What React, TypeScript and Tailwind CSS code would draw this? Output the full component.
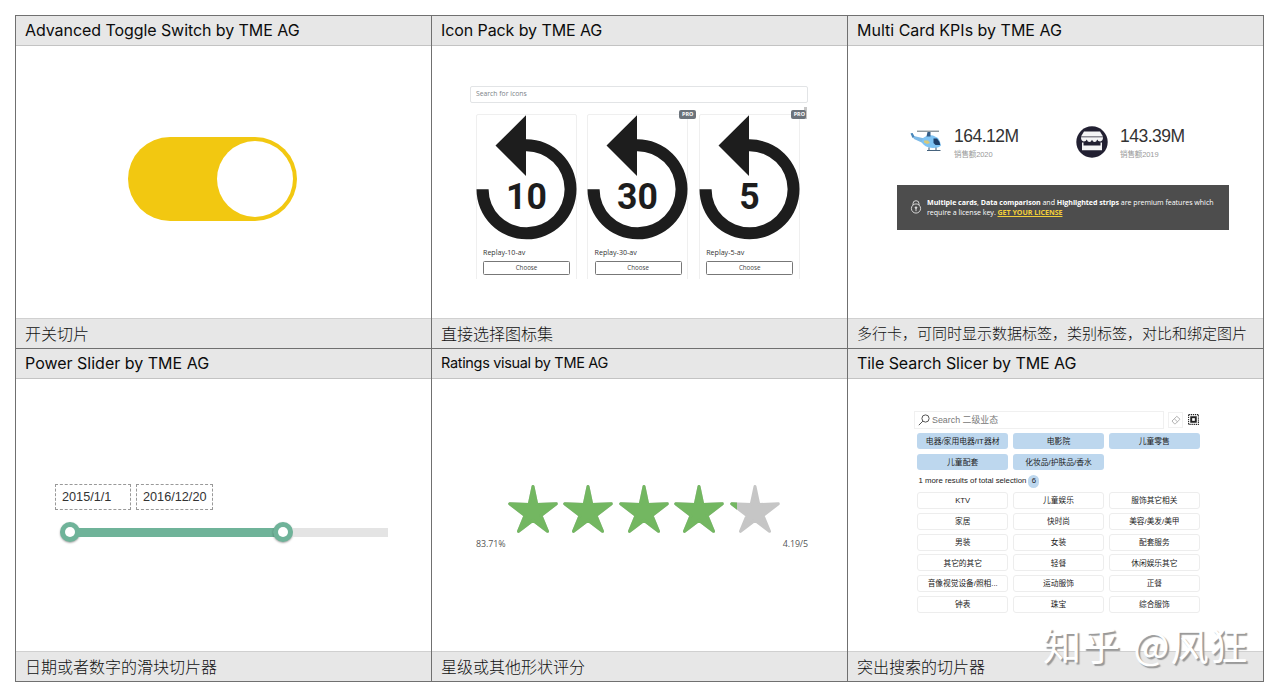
import type { ReactNode } from "react";

const CJK = "font-['Liberation_Sans','Noto_Sans_CJK_SC',sans-serif]";
const SEGOE = "font-['Open_Sans','Noto_Sans_CJK_SC',sans-serif]";

function Cell({
  title,
  titleClass,
  caption,
  captionClass,
  children,
}: {
  title: string;
  titleClass: string;
  caption: string;
  captionClass: string;
  children: ReactNode;
}) {
  return (
    <section className="flex h-[332px] w-[415px] flex-col bg-white">
      <h2
        className={`flex h-[30px] shrink-0 items-center border-b border-[#c3c3c3] bg-[#e7e7e7] pb-[2px] pl-[9px] font-['Inter',sans-serif] whitespace-nowrap text-[#0c0c0c] ${titleClass}`}
      >
        {title}
      </h2>
      <div className="h-[272px] shrink-0 overflow-hidden">{children}</div>
      <p
        className={`flex h-[30px] shrink-0 items-center border-t border-[#d0d0d0] bg-[#e7e7e7] pl-[9px] font-['Noto_Sans_CJK_SC',sans-serif] font-light whitespace-nowrap text-[#111] ${captionClass}`}
      >
        {caption}
      </p>
    </section>
  );
}

function ToggleSwitch() {
  return (
    <div className="pt-[91px] pl-[112px]">
      <div className="flex h-[84px] w-[169px] items-center justify-end rounded-full bg-[#f2c811] pr-1">
        <div className="size-[76px] rounded-full bg-white" />
      </div>
    </div>
  );
}

function ReplayCard({ value, pro, clipped }: { value: string; pro?: boolean; clipped?: boolean }) {
  return (
    <div className="relative h-[170px] w-[101px] shrink-0 rounded-t-[2px] border border-[#efefef]">
      <svg viewBox="0 0 101 126" className="-mt-px -ml-px block h-[126px] w-[101px]" fill="#1d1d1d">
        <path d="M50 1.2V25.3A50 50 0 1 1 .5 75.3H12.6A38 38 0 1 0 50 37.3V62L19.5 31.6Z" />
        <text
          transform="translate(50.5 94.5) scale(.95 1)"
          textAnchor="middle"
          className="font-['Roboto',sans-serif] text-[37.500px] font-bold"
        >
          {value}
        </text>
      </svg>
      <div className={`pl-[6.5px] text-[7px] leading-none text-[#333] ${SEGOE}`}>
        <div className="mt-[9px] text-[7.1px]">Replay-{value}-av</div>
        <div className="mt-[5px] flex h-[14px] w-[87px] items-center justify-center rounded-[1.5px] border border-[#777] text-[6.2px] text-[#444]">
          Choose
        </div>
      </div>
      {pro && (
        <span
          className={`absolute -top-[5px] flex h-[9px] items-center rounded-[2px] bg-[#6c737b] pl-[3px] font-['Open_Sans',sans-serif] text-[5.4px] leading-none font-bold text-white ${
            clipped ? "left-[91px] w-[15px] overflow-hidden" : "left-[91px] w-[17px]"
          }`}
        >
          PRO
        </span>
      )}
    </div>
  );
}

function IconPack() {
  return (
    <div className="pt-[40px] pl-[38px]">
      <div
        className={`flex h-[17px] w-[338px] items-center rounded-[2px] border border-[#e2e4e6] pl-[5px] text-[6.8px] text-[#7c8288] ${SEGOE}`}
      >
        Search for icons
      </div>
      <div className="flex h-[176px] w-[338px] overflow-hidden">
        <div className="flex gap-[10.6px] pt-[11px] pl-[5.5px]">
          <ReplayCard value="10" />
          <ReplayCard value="30" pro />
          <ReplayCard value="5" pro clipped />
        </div>
        <div className="mt-1 ml-[4.5px] h-[12px] w-[3px] shrink-0 bg-[#c6c6c6]" />
      </div>
    </div>
  );
}

function Helicopter() {
  return (
    <svg viewBox="0 0 32 24" className="h-[24px] w-[32px]">
      <path d="M1 4.5 4 10l11 5 2-5-9-2-4-1-1.500-3Z" fill="#7db9e6" />
      <path d="M.5 4.500l2-.5 2 3.500-2 1.500Z" fill="#4a86b8" />
      <path d="M13 9Q17 5.500 23 6.500L28 9Q30.500 12 31 16.500Q29 19 23 19Q14 18.500 11.500 13Z" fill="#7fc3f3" />
      <path d="M23.500 9.500 27 9.500Q30 12.500 30.200 16H25.500L23.500 14Z" fill="#1f3f68" />
      <path d="M14 11.500h4l2 2.500-3 1-3-1.500Z" fill="#d9c979" />
      <path d="M17.500 3h3v4.500h-4Z" fill="#335d88" />
      <path d="M7 2.200H29" stroke="#6c7880" strokeWidth="1.100" />
      <path d="M19 18.500v3M26 18.500v3M17 21.500h13.500" stroke="#46637d" strokeWidth="1.100" fill="none" />
    </svg>
  );
}

function Store() {
  return (
    <svg viewBox="0 0 32 32" className="h-[32px] w-[32px]">
      <circle cx="16" cy="16" r="15.700" fill="#222032" />
      <path d="M8 5.500h16l3 5H5Z" fill="#f4f4f6" />
      <path
        d="M5 11.300h22Q27 15.300 24.200 15.500Q22 15.300 21.200 13.500Q20.500 16 18.600 16Q16.800 16 16 13.800Q15.200 16 13.400 16Q11.500 16 10.800 13.500Q10 15.300 7.800 15.500Q5 15.300 5 11.300Z"
        fill="#f4f4f6"
      />
      <path d="M6 16.500h1.500v3h17v-3H26v7.800H6Z" fill="#f4f4f6" />
    </svg>
  );
}

function Kpi({ value, label }: { value: string; label: string }) {
  return (
    <div className={`pt-px leading-none whitespace-nowrap ${CJK}`}>
      <div className="h-[23px] text-[17.500px] tracking-[-0.500px] text-[#333]">{value}</div>
      <div className="text-[7.500px] tracking-[-0.100px] text-[#999]">{label}</div>
    </div>
  );
}

function MultiCards() {
  return (
    <div className="flex flex-col pt-[81px] pl-[49px]">
      <div className="flex h-[57.500px] items-start">
        <div className="w-[57px] pt-[2px] pl-[13px]">
          <Helicopter />
        </div>
        <div className="w-[110px]">
          <Kpi value="164.12M" label="销售额2020" />
        </div>
        <div className="-mt-px w-[56px] pl-[12px]">
          <Store />
        </div>
        <Kpi value="143.39M" label="销售额2019" />
      </div>
      <div className="flex h-[45px] w-[332px] items-center bg-[#4d4d4d] pl-[13px] text-white">
        <svg viewBox="0 0 12 14" className="h-[14px] w-[12px]" fill="none" stroke="#e4e4e4" strokeWidth=".9">
          <circle cx="6" cy="8.500" r="4.600" />
          <path d="M3 5V3.700a3 3 0 0 1 6 0V5M6 8v3.200" />
          <circle cx="6" cy="7.600" r=".8" fill="#e4e4e4" />
        </svg>
        <p className="ml-[5px] font-['Open_Sans',sans-serif] text-[7.100px] leading-[10.500px] tracking-[-0.037px] whitespace-nowrap">
          <b>Multiple cards</b>, <b>Data comparison</b> and <b>Highlighted strips</b> are premium features which
          <br />
          require a license key. <b className="text-[#f2cf3a] underline">GET YOUR LICENSE</b>
        </p>
      </div>
    </div>
  );
}

function Handle() {
  return (
    <div className="flex size-[20px] shrink-0 items-center justify-center rounded-full bg-[#6fb399] shadow-[0_1px_2px_rgba(0,0,0,0.35)]">
      <div className="size-[10px] rounded-full bg-white" />
    </div>
  );
}

function PowerSlider() {
  return (
    <div className="pt-[105px] pl-[39px]">
      <div className="flex gap-[5px] font-['Liberation_Sans',sans-serif] text-[12.700px] leading-none text-[#333]">
        <div className="flex h-[26px] w-[76px] items-center border border-dashed border-[#999] pl-[6px]">2015/1/1</div>
        <div className="flex h-[26px] w-[77px] items-center border border-dashed border-[#999] pl-[6px]">2016/12/20</div>
      </div>
      <div className="mt-[12px] ml-[5px] flex h-[20px] items-center">
        <Handle />
        <div className="-mx-1 h-[9px] w-[201px] bg-[#6fb399]" />
        <Handle />
        <div className="h-[9px] w-[95px] bg-[#e4e4e4]" />
      </div>
    </div>
  );
}

const STAR = "M26 2.500 29.800 20.500 49.300 19.800 34 31.500 40.500 47.300 26 36.300 11.500 47.300 18 31.500 2.700 19.800 22.200 20.500Z";

function Star({ fill }: { fill: number }) {
  return (
    <svg viewBox="0 0 52 50" className="h-[50px] w-[52px] shrink-0" strokeLinejoin="round" strokeWidth="3">
      <defs>
        <clipPath id={`star-${fill}`}>
          <rect x="0" y="0" width={fill} height="50" />
        </clipPath>
      </defs>
      <path d={STAR} fill="#c6c6c6" stroke="#c6c6c6" />
      <path d={STAR} fill="#73b761" stroke="#73b761" clipPath={`url(#star-${fill})`} />
    </svg>
  );
}

function Ratings() {
  return (
    <div className="pt-[105px] pl-[44px]">
      <div className="flex gap-[3.400px] pl-[31px]">
        {[52, 52, 52, 52, 8].map((f, i) => (
          <Star key={i} fill={f} />
        ))}
      </div>
      <div className={`mt-[5.500px] flex w-[332px] justify-between text-[8.900px] leading-none tracking-[-0.100px] text-[#555] ${SEGOE}`}>
        <span>83.71%</span>
        <span>4.19/5</span>
      </div>
    </div>
  );
}

const SELECTED = ["电器/家用电器/IT器材", "电影院", "儿童零售", "儿童配套", "化妆品/护肤品/香水"];
const OPTIONS = [
  "KTV", "儿童娱乐", "服饰其它相关",
  "家居", "快时尚", "美容/美发/美甲",
  "男装", "女装", "配套服务",
  "其它的其它", "轻餐", "休闲娱乐其它",
  "音像视觉设备/照相...", "运动服饰", "正餐",
  "钟表", "珠宝", "综合服饰",
];

function TileSlicer() {
  return (
    <div className={`pt-[32px] pl-[66px] leading-none text-[#222] ${CJK}`}>
      <div className="flex h-[18px] items-center">
        <div className="flex h-[18px] w-[250px] items-center border border-[#f0f0f0] pl-[3px] text-[8.900px] text-[#777]">
          <svg viewBox="0 0 12 12" className="mr-[2px] size-[12px]" fill="none" stroke="#555" strokeWidth="1">
            <circle cx="7.500" cy="4.500" r="3.600" />
            <path d="M4.900 7.100.8 11.200" />
          </svg>
          Search 二级业态
        </div>
        <div className="ml-[4px] flex h-[16px] w-[15px] items-center justify-center border border-[#f1f1f1]">
          <svg viewBox="0 0 10 10" className="size-[10px]" fill="none" stroke="#aaa" strokeWidth=".9">
            <path d="M1 6 5.800 1.300 9 4.200 4.300 8.900H3.500ZM3.300 3.800 6.500 6.800" />
          </svg>
        </div>
        <svg viewBox="0 0 11 11" className="-mt-px ml-[5px] size-[11px]" fill="none" stroke="#222">
          <rect x=".6" y=".6" width="9.800" height="9.800" strokeWidth="1.100" strokeDasharray="1.300 .8" />
          <rect x="3.200" y="3.200" width="4.600" height="4.600" strokeWidth="1.900" />
        </svg>
      </div>
      <div className="mt-[4px] ml-[3px] grid w-[283px] grid-cols-3 gap-x-[4.500px] gap-y-[5px]">
        {SELECTED.map((s) => (
          <div
            key={s}
            className="flex h-[16px] items-center justify-center rounded-[3px] bg-[#bdd7ee] pt-px text-[7.800px] whitespace-nowrap"
          >
            {s}
          </div>
        ))}
      </div>
      <div className="ml-[4.500px] flex h-[22px] items-center text-[7.800px] whitespace-nowrap">
        1 more results of total selection
        <span className="ml-[2px] flex h-[13px] w-[11px] items-center justify-center rounded-full bg-[#bdd7ee]">6</span>
      </div>
      <div className="ml-[3px] grid w-[283px] grid-cols-3 gap-x-[4.500px] gap-y-[3.800px]">
        {OPTIONS.map((s) => (
          <div
            key={s}
            className="flex h-[17px] items-center justify-center rounded-[3px] border border-[#ededed] pt-px text-[7.700px] whitespace-nowrap"
          >
            {s}
          </div>
        ))}
      </div>
    </div>
  );
}

export default function App() {
  return (
    <main className="relative h-[698px] w-[1280px] overflow-hidden bg-white pt-[15px] pl-[15px]">
      <div className="grid w-[1249px] grid-cols-[415px_415px_415px] gap-px border border-[#707070] bg-[#707070]">
        <Cell
          title="Advanced Toggle Switch by TME AG"
          titleClass="text-[16px] tracking-[-0.070px]"
          caption="开关切片"
          captionClass="pb-[2px] text-[16px]"
        >
          <ToggleSwitch />
        </Cell>
        <Cell
          title="Icon Pack by TME AG"
          titleClass="text-[16px] tracking-[-0.090px]"
          caption="直接选择图标集"
          captionClass="pb-[2px] text-[16px]"
        >
          <IconPack />
        </Cell>
        <Cell
          title="Multi Card KPIs by TME AG"
          titleClass="text-[16px]"
          caption="多行卡，可同时显示数据标签，类别标签，对比和绑定图片"
          captionClass="text-[15px]"
        >
          <MultiCards />
        </Cell>
        <Cell
          title="Power Slider by TME AG"
          titleClass="text-[16px]"
          caption="日期或者数字的滑块切片器"
          captionClass="pb-[2px] text-[16px]"
        >
          <PowerSlider />
        </Cell>
        <Cell
          title="Ratings visual by TME AG"
          titleClass="text-[14.500px] tracking-[-0.330px]"
          caption="星级或其他形状评分"
          captionClass="pb-[2px] text-[16px]"
        >
          <Ratings />
        </Cell>
        <Cell
          title="Tile Search Slicer by TME AG"
          titleClass="text-[16px] tracking-[-0.050px]"
          caption="突出搜索的切片器"
          captionClass="pb-[2px] text-[16px]"
        >
          <TileSlicer />
        </Cell>
      </div>
      <div className="absolute top-[624px] left-[1043px] font-['Noto_Sans_CJK_SC',sans-serif] text-[38px] leading-[40px] tracking-[1px] whitespace-nowrap text-white [word-spacing:3px] [text-shadow:2px_2px_1px_#999]">
        知乎 @风狂
      </div>
    </main>
  );
}
